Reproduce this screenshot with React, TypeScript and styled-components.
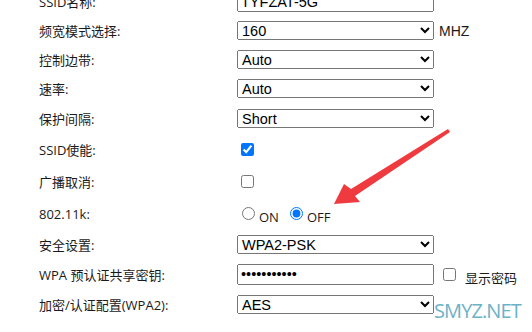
import React from 'react'
import styled, { createGlobalStyle } from 'styled-components'

const GlobalStyle = createGlobalStyle`
  html, body {
    margin: 0;
    padding: 0;
    background: #fff;
    overflow: hidden;
  }
`

type Field = {
  label: string
  height: number
  control: React.ReactNode
}

export default function App() {
  const fields: Field[] = [
    {
      label: 'SSID名称:',
      height: 29,
      control: <StyledTextInput type="text" defaultValue="TYFZAT-5G" />,
    },
    {
      label: '频宽模式选择:',
      height: 29,
      control: (
        <>
          <StyledSelect defaultValue="160">
            <option>160</option>
            <option>80</option>
            <option>40</option>
          </StyledSelect>
          <StyledUnit>MHZ</StyledUnit>
        </>
      ),
    },
    {
      label: '控制边带:',
      height: 29,
      control: (
        <StyledSelect defaultValue="Auto">
          <option>Auto</option>
        </StyledSelect>
      ),
    },
    {
      label: '速率:',
      height: 29,
      control: (
        <StyledSelect defaultValue="Auto">
          <option>Auto</option>
        </StyledSelect>
      ),
    },
    {
      label: '保护间隔:',
      height: 30,
      control: (
        <StyledSelect defaultValue="Short">
          <option>Short</option>
          <option>Long</option>
        </StyledSelect>
      ),
    },
    {
      label: 'SSID使能:',
      height: 32,
      control: <StyledCheckbox type="checkbox" defaultChecked />,
    },
    {
      label: '广播取消:',
      height: 33,
      control: <StyledCheckbox type="checkbox" />,
    },
    {
      label: '802.11k:',
      height: 31,
      control: (
        <>
          <StyledRadio type="radio" name="k" />
          <StyledRadioText>ON</StyledRadioText>
          <StyledRadio type="radio" name="k" defaultChecked $gap={11} />
          <StyledRadioText>OFF</StyledRadioText>
        </>
      ),
    },
    {
      label: '安全设置:',
      height: 30,
      control: (
        <StyledSelect defaultValue="WPA2-PSK">
          <option>WPA2-PSK</option>
          <option>WPA-PSK</option>
        </StyledSelect>
      ),
    },
    {
      label: 'WPA 预认证共享密钥:',
      height: 30,
      control: (
        <>
          <StyledTextInput type="password" defaultValue="12345678901" />
          <StyledCheckbox type="checkbox" $left={9} />
          <StyledHint>显示密码</StyledHint>
        </>
      ),
    },
    {
      label: '加密/认证配置(WPA2):',
      height: 30,
      control: (
        <StyledSelect defaultValue="AES">
          <option>AES</option>
          <option>TKIP</option>
        </StyledSelect>
      ),
    },
  ]

  return (
    <StyledPage>
      <GlobalStyle />
      <StyledForm>
        {fields.map((field) => (
          <StyledRow key={field.label} $height={field.height}>
            <StyledLabel>{field.label}</StyledLabel>
            <StyledValue>{field.control}</StyledValue>
          </StyledRow>
        ))}
      </StyledForm>

      <StyledArrow viewBox="0 0 532 332" width="532" height="332">
        <polygon
          points="334,204 344,184 351,189 448,129 450,132 355,196 360,202"
          fill="#ef3b3f"
        />
      </StyledArrow>

      <StyledWatermark>SMYZ.NET</StyledWatermark>
    </StyledPage>
  )
}

const StyledPage = styled('div')`
  position: relative;
  width: 532px;
  height: 332px;
  overflow: hidden;
  background: #fff;
`

const StyledForm = styled('div')`
  display: flex;
  flex-direction: column;
  margin-top: -13px;
  padding-left: 39px;
`

const StyledRow = styled('div')<{ $height: number }>`
  display: grid;
  grid-template-columns: 198px 1fr;
  align-items: center;
  height: ${(p) => p.$height}px;
`

const StyledLabel = styled('span')`
  font-family: 'Open Sans', 'Noto Sans CJK SC', sans-serif;
  font-size: 13px;
  color: #1a1a1a;
  white-space: nowrap;
`

const StyledValue = styled('div')`
  display: flex;
  align-items: center;
`

const StyledSelect = styled('select')`
  width: 197px;
  height: 19px;
  margin: 0;
  font-family: 'Liberation Sans', Arial, sans-serif;
  font-size: 14.5px;
  color: #000;
`

const StyledTextInput = styled('input')`
  box-sizing: border-box;
  width: 197px;
  height: 21px;
  margin: 0;
  font-family: 'Liberation Sans', Arial, sans-serif;
  font-size: 14.5px;
  color: #000;
`

const StyledUnit = styled('span')`
  margin-left: 5px;
  font-family: 'Liberation Sans', Arial, sans-serif;
  font-size: 14px;
  color: #1a1a1a;
`

const StyledCheckbox = styled('input')<{ $left?: number }>`
  width: 13px;
  height: 13px;
  margin: 0 0 0 ${(p) => p.$left ?? 4}px;
`

const StyledRadio = styled('input')<{ $gap?: number }>`
  width: 13px;
  height: 13px;
  margin: 0 0 0 ${(p) => p.$gap ?? 5}px;
`

const StyledRadioText = styled('span')`
  margin-left: 4px;
  padding-top: 7px;
  font-family: 'Open Sans', 'Noto Sans CJK SC', sans-serif;
  font-size: 13px;
  color: #1a1a1a;
`

const StyledHint = styled('span')`
  margin-left: 9px;
  padding-top: 6px;
  font-family: 'Open Sans', 'Noto Sans CJK SC', sans-serif;
  font-size: 13px;
  color: #1a1a1a;
`

const StyledArrow = styled('svg')`
  position: absolute;
  left: 0;
  top: 0;
  pointer-events: none;
`

const StyledWatermark = styled('span')`
  position: absolute;
  left: 434px;
  top: 297px;
  font-family: 'Open Sans', sans-serif;
  font-size: 20px;
  letter-spacing: -0.9px;
  color: #6cb2c6;
`
